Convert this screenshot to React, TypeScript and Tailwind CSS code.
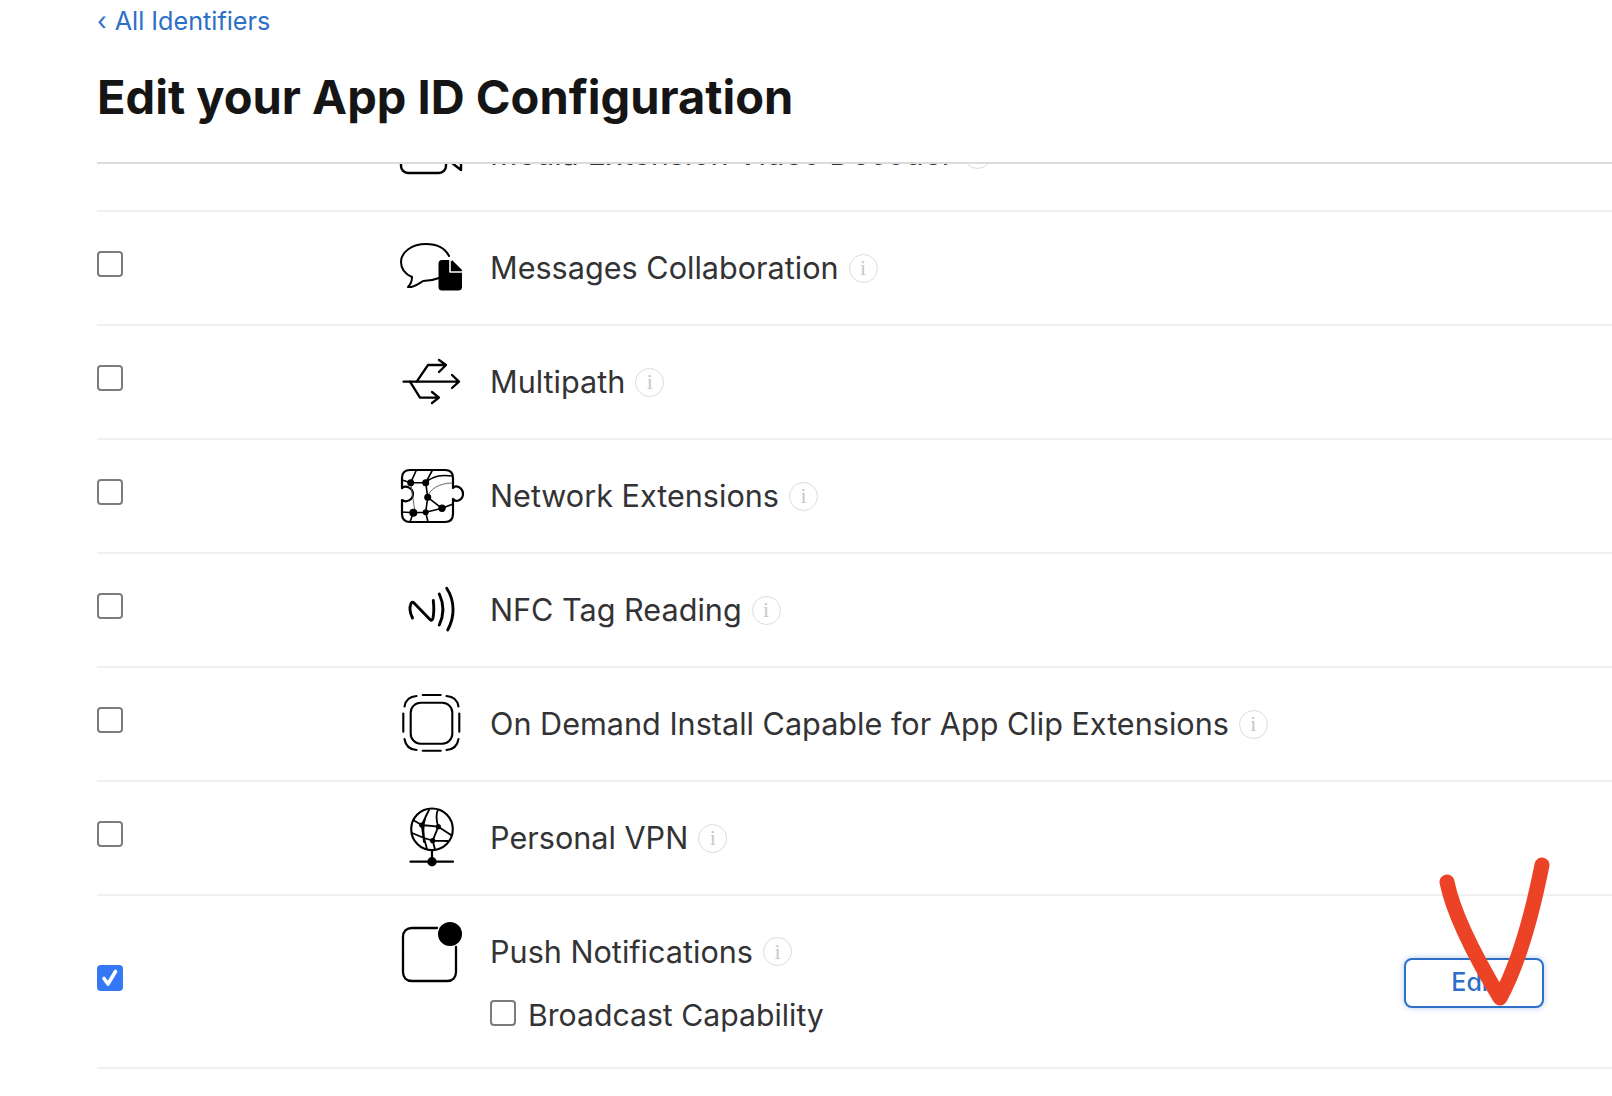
import React from 'react';

const MessagesIcon = () => (
  <svg width="68" height="68" viewBox="0 0 68 68" fill="none" stroke="#000" strokeWidth="2" strokeLinecap="round" strokeLinejoin="round">
    <path d="M51 22C47 14 38 10 28 10C14 10 3 18 3 28C3 35 7 40 14 43C14 47 13 50 10 53C15 54 20 50 25 47C30 47 36 46 41 44" />
    <path d="M44 27H52L63 37V53C63 54.500 62 55.500 60 55.500H44C42 55.500 41.500 54.500 41.500 53V30C41.500 28 42 27 44 27Z" fill="#000" stroke="#000" />
    <path d="M52 26V38H64" stroke="#fff" strokeWidth="1.600" />
    <path d="M54 26L64.500 36.500H54Z" fill="#000" stroke="none" />
  </svg>
);

const MultipathIcon = () => (
  <svg width="68" height="68" viewBox="0 0 68 68" fill="none" stroke="#000" strokeWidth="2.300" strokeLinecap="round" strokeLinejoin="round">
    <path d="M5.500 33.700H61M54 27L61 33.700L54 40" />
    <path d="M18.700 33.700L30 17H48M41 12L48 17L41 24" />
    <path d="M12 33.700L22 49.700H41M34 44L41 49.700L34 55" />
  </svg>
);

const NetworkIcon = () => (
  <svg width="68" height="68" viewBox="0 0 68 68" fill="none" stroke="#000" strokeLinecap="round" strokeLinejoin="round">
    <path strokeWidth="2.200" d="M12 8H47C52 8 55 11 55 16V26C58 22 65 26 65 32C65 38 58 41 55 37V52C55 57 52 60 47 60H12C7 60 4 57 4 52V38C8 41 15 38 15 32C15 26 8 23 4 26V16C4 11 7 8 12 8Z" />
    <path strokeWidth="1.600" d="M4 18L12.700 20.700H27.700L29.700 35.300L44 46.300L55 42M12.700 20.700L18 9M27.700 20.700L34 9M4 50L15.300 50.700L27.700 50.300L44 46.300M27.700 50.300L29.700 35.300M15.300 50.700L12 60M27.700 50.300L30 60M27.700 20.700C36 13 45 13 54 14" />
    <path strokeWidth="0.900" stroke="#555" d="M29.700 35.300C31 27 42 21 54 21M12.700 20.700L17 50" />
    <g fill="#000" stroke="none">
      <circle cx="12.700" cy="20.700" r="3.500" />
      <circle cx="27.700" cy="20.700" r="3.500" />
      <circle cx="29.700" cy="35.300" r="3.500" />
      <circle cx="44" cy="46.300" r="3.700" />
      <circle cx="27.700" cy="50.300" r="3" />
      <circle cx="15.300" cy="50.700" r="4" />
    </g>
  </svg>
);

const NfcIcon = () => (
  <svg width="68" height="68" viewBox="0 0 68 68" fill="none" stroke="#000" strokeWidth="2.900" strokeLinecap="round" strokeLinejoin="round">
    <path d="M14.500 42C12 37 11.500 31 13 27.500C14 26 15 26 16 27L32 43.500C33.500 45 34.500 44 35 42C36 37 36 31 35.300 24.500" />
    <path d="M41.300 18C46 28 46 39 41.300 49" />
    <path d="M48.700 12.300C57 25 57 41 49.700 54" />
  </svg>
);

const ClipIcon = () => (
  <svg width="68" height="68" viewBox="0 0 68 68" fill="none" stroke="#000" strokeWidth="2.100" strokeLinecap="round">
    <rect x="12.700" y="12.700" width="41.600" height="41" rx="10" />
    <path d="M24.700 5H42.700M24.700 60.700H42.700M5.300 23.500V41.700M61.300 23.500V41.700" />
    <path d="M6.500 16.500C7.500 10 12 6.500 18.500 6M48.500 6C55 6.500 59.500 10 60.500 16.500M6.500 49C7.500 55.500 12 59.500 18.500 60M60.500 49C59.500 55.500 55 59.500 48.500 60" />
  </svg>
);

const GlobeIcon = () => (
  <svg width="68" height="68" viewBox="0 0 68 68" fill="none" stroke="#000" strokeWidth="1.800" strokeLinecap="round" strokeLinejoin="round">
    <circle cx="34" cy="25.300" r="20.800" strokeWidth="2.100" />
    <path d="M23.700 21L31 6M40.300 22.700C38 16 38 10 40 5.500M23.700 21L40.300 22.700L53 31M23.700 21L15 16M23.700 21L26 38M34.700 36.700L40.300 22.700M34.700 36.700L26 34L14 29M34.700 36.700L50 37M34.700 36.700L37 45.500M31 6C27 12 24 20 26 34L29 45" />
    <path d="M34 46V57.700M12.500 57.700H55" strokeWidth="2.200" />
    <g fill="#000" stroke="none">
      <circle cx="23.700" cy="21" r="2.600" />
      <circle cx="40.300" cy="22.700" r="2.600" />
      <circle cx="34.700" cy="36.700" r="2.600" />
      <circle cx="34" cy="57.700" r="4.700" />
    </g>
  </svg>
);

const PushIcon = () => (
  <svg width="68" height="68" viewBox="0 0 68 68" fill="none" stroke="#000" strokeWidth="2.300" strokeLinecap="round">
    <path d="M39 8H14C8.500 8 5 11.500 5 17V52C5 57.500 8.500 61 14 61H49C54.500 61 58 57.500 58 52V27" />
    <circle cx="52" cy="14" r="12" fill="#000" stroke="none" />
  </svg>
);

const InfoIcon = () => (
  <span className="ml-[10px] flex h-[29px] w-[29px] shrink-0 items-center justify-center rounded-full border-[1.5px] border-[#dcdcdc] font-['Liberation_Serif',serif] text-[22px] leading-none text-[#c8c8c8]">
    i
  </span>
);

const Checkbox = ({ checked = false }: { checked?: boolean }) =>
  checked ? (
    <span className="flex h-[26px] w-[26px] shrink-0 items-center justify-center rounded-[4px] bg-[#3478f6]">
      <svg width="20" height="20" viewBox="0 0 20 20" fill="none" stroke="#fff" strokeWidth="3.600" strokeLinecap="round" strokeLinejoin="round">
        <path d="M4 10.500L8 16L15.500 3.500" />
      </svg>
    </span>
  ) : (
    <span className="block h-[26px] w-[26px] shrink-0 rounded-[4px] border-2 border-[#7c7c7c] bg-white" />
  );

const Label = ({ text }: { text: string }) => (
  <span className="whitespace-nowrap text-[30.6px] leading-[36px] text-[#333336]">{text}</span>
);

const Row = ({ icon, title }: { icon: React.ReactNode; title: string }) => (
  <div className="flex h-[114px] items-center border-b-2 border-[#f0f0f0]">
    <div className="-mt-[9px] w-[301px] shrink-0">
      <Checkbox />
    </div>
    <div className="w-[92px] shrink-0">{icon}</div>
    <Label text={title} />
    <InfoIcon />
  </div>
);

const rows = [
  { title: 'Messages Collaboration', icon: <MessagesIcon /> },
  { title: 'Multipath', icon: <MultipathIcon /> },
  { title: 'Network Extensions', icon: <NetworkIcon /> },
  { title: 'NFC Tag Reading', icon: <NfcIcon /> },
  { title: 'On Demand Install Capable for App Clip Extensions', icon: <ClipIcon /> },
  { title: 'Personal VPN', icon: <GlobeIcon /> },
];

export default function App() {
  return (
    <div className="relative h-[1096px] w-[1612px] overflow-hidden bg-white pl-[97px] font-['Inter',sans-serif]">
      {/* header */}
      <div className="h-[162px] pt-[3px]">
        <a className="flex items-center text-[25.200px] leading-[36px] text-[#2d6fc9]">
          <span className="mr-[8px]">‹</span>
          All Identifiers
        </a>
        <h1 className="mt-[30px] text-[47px] font-bold leading-[56px] text-[#151516]">
          Edit your App ID Configuration
        </h1>
      </div>

      <div className="border-t-2 border-[#dcdcdc]">
        {/* row scrolled under the header */}
        <div className="h-[48px] overflow-hidden border-b-2 border-[#f0f0f0]">
          <div className="-mt-[67px] flex h-[114px] items-center">
            <div className="w-[301px] shrink-0" />
            <div className="w-[92px] shrink-0">
              <svg width="68" height="68" viewBox="0 0 68 68" fill="none" stroke="#000" strokeWidth="2.400" strokeLinecap="round" strokeLinejoin="round">
                <rect x="3" y="6" width="45" height="47" rx="7" />
                <path d="M54 41L63 34V50L54 43" />
              </svg>
            </div>
            <Label text="Media Extension Video Decoder" />
            <InfoIcon />
          </div>
        </div>

        {rows.map((row) => (
          <Row key={row.title} icon={row.icon} title={row.title} />
        ))}

        {/* push notifications */}
        <div className="flex h-[173px] items-center border-b-2 border-[#f0f0f0]">
          <div className="-mt-[8px] w-[301px] shrink-0">
            <Checkbox checked />
          </div>
          <div className="-mt-[56px] w-[92px] shrink-0">
            <PushIcon />
          </div>
          <div className="flex flex-col gap-[27px] pt-[3px]">
            <div className="flex items-center">
              <Label text="Push Notifications" />
              <InfoIcon />
            </div>
            <div className="flex items-center gap-[12px]">
              <span className="-mt-[4px]">
                <Checkbox />
              </span>
              <span className="whitespace-nowrap text-[30.200px] leading-[36px] text-[#333336]">Broadcast Capability</span>
            </div>
          </div>
          <button className="ml-auto mr-[68px] mt-[2px] h-[50px] w-[140px] rounded-[8px] border-2 border-[#2d6fc9] bg-white text-center font-['Inter',sans-serif] text-[25px] font-medium text-[#2d6fc9] shadow-[0_0_6px_rgba(45,111,201,0.35)]">
            Edit
          </button>
        </div>
      </div>

      {/* hand-drawn red mark over the button */}
      <svg className="absolute left-0 top-0" width="1612" height="1096" fill="none" stroke="#ec4327" strokeWidth="15" strokeLinecap="round" strokeLinejoin="round">
        <path d="M1447 882C1453 912 1470 948 1500 998C1518 965 1532 915 1542 865" />
      </svg>
    </div>
  );
}
